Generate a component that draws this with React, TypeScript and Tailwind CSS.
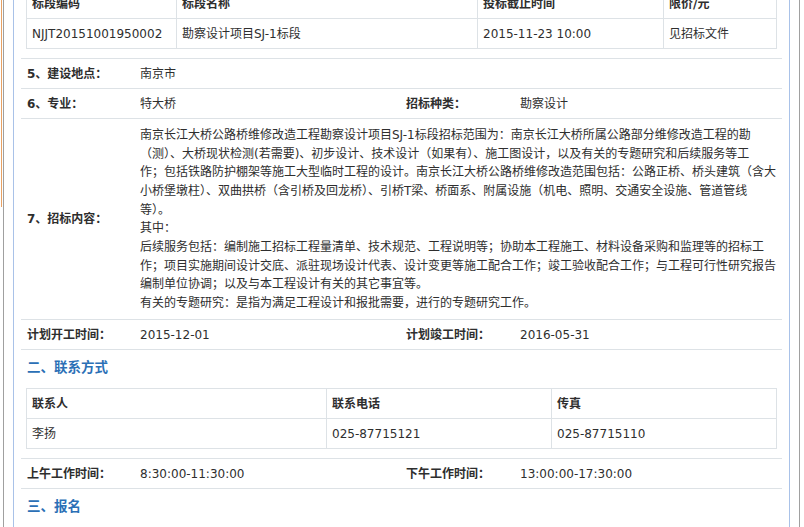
import React from "react";

const line = "border-[#dde2e6]";

function LabelRow({
  l1,
  v1,
  l2,
  v2,
}: {
  l1: string;
  v1: string;
  l2?: string;
  v2?: string;
}) {
  return (
    <div className={`grid h-[30px] grid-cols-[113px_266px_114px_1fr] items-center border-t ${line} pl-[6px]`}>
      <div className="font-bold">{l1}</div>
      <div>{v1}</div>
      <div className="font-bold">{l2}</div>
      <div>{v2}</div>
    </div>
  );
}

const contentLines = [
  "南京长江大桥公路桥维修改造工程勘察设计项目SJ-1标段招标范围为：南京长江大桥所属公路部分维修改造工程的勘",
  "（测）、大桥现状检测(若需要)、初步设计、技术设计（如果有）、施工图设计，以及有关的专题研究和后续服务等工",
  "作；包括铁路防护棚架等施工大型临时工程的设计。南京长江大桥公路桥维修改造范围包括：公路正桥、桥头建筑（含大",
  "小桥堡墩柱）、双曲拱桥（含引桥及回龙桥）、引桥T梁、桥面系、附属设施（机电、照明、交通安全设施、管道管线",
  "等）。",
  "其中：",
  "后续服务包括：编制施工招标工程量清单、技术规范、工程说明等；协助本工程施工、材料设备采购和监理等的招标工",
  "作；项目实施期间设计交底、派驻现场设计代表、设计变更等施工配合工作；竣工验收配合工作；与工程可行性研究报告",
  "编制单位协调；以及与本工程设计有关的其它事宜等。",
  "有关的专题研究：是指为满足工程设计和报批需要，进行的专题研究工作。",
];

export default function App() {
  const cell = `flex h-[30px] items-center border-r border-b ${line} pl-[5px] whitespace-nowrap`;
  return (
    <div className="flex h-[527px] w-[804px] overflow-hidden bg-white font-['DejaVu_Sans','Noto_Sans_CJK_SC',sans-serif] text-[12px] text-[#2e2e2e]">
      <div className="w-px shrink-0" />
      <div className="h-[207px] w-px shrink-0 bg-[#e9a263]" />
      <div className="w-px shrink-0" />
      <div className="flex w-[797px] shrink-0 border-x border-[#a0a0a0] px-[9px]">
        <div className="w-[777px] shrink-0 border-x border-[#a9c2e8] px-[7px]">
          <div className="-mt-[12px]">
            {/* top table */}
            <div className={`mx-[5px] grid grid-cols-[150px_301px_186px_113px] border-l border-t ${line}`}>
              <div className={`${cell} font-bold`}>标段编码</div>
              <div className={`${cell} font-bold`}>标段名称</div>
              <div className={`${cell} font-bold`}>投标截止时间</div>
              <div className={`${cell} font-bold`}>限价/元</div>
              <div className={cell}>NJJT20151001950002</div>
              <div className={cell}>勘察设计项目SJ-1标段</div>
              <div className={cell}>2015-11-23 10:00</div>
              <div className={cell}>见招标文件</div>
            </div>

            <div className={`mt-[9px] border-b ${line}`}>
              <LabelRow l1="5、建设地点：" v1="南京市" />
              <LabelRow l1="6、专业：" v1="特大桥" l2="招标种类：" v2="勘察设计" />
              <div className={`grid h-[201px] grid-cols-[113px_1fr] border-t ${line} pl-[6px]`}>
                <div className="flex items-center font-bold">7、招标内容：</div>
                <div className="pt-[7px] leading-[18.67px]">
                  {contentLines.map((t, i) => (
                    <div key={i} className="whitespace-nowrap">
                      {t}
                    </div>
                  ))}
                </div>
              </div>
              <LabelRow l1="计划开工时间：" v1="2015-12-01" l2="计划竣工时间：" v2="2016-05-31" />
            </div>

            <div className="flex h-[38px] items-center pb-[3px] pl-[6px] text-[13.5px] font-bold text-[#2b70b6]">
              二、联系方式
            </div>

            <div className={`mx-[5px] grid grid-cols-[300px_225px_225px] border-l border-t ${line}`}>
              <div className={`${cell} font-bold`}>联系人</div>
              <div className={`${cell} font-bold`}>联系电话</div>
              <div className={`${cell} font-bold`}>传真</div>
              <div className={cell}>李扬</div>
              <div className={cell}>025-87715121</div>
              <div className={cell}>025-87715110</div>
            </div>

            <div className={`mt-[9px] border-b ${line}`}>
              <LabelRow l1="上午工作时间：" v1="8:30:00-11:30:00" l2="下午工作时间：" v2="13:00:00-17:30:00" />
            </div>

            <div className="flex h-[35px] items-center pl-[6px] text-[13.5px] font-bold text-[#2b70b6]">
              三、报名
            </div>
          </div>
        </div>
      </div>
    </div>
  );
}
